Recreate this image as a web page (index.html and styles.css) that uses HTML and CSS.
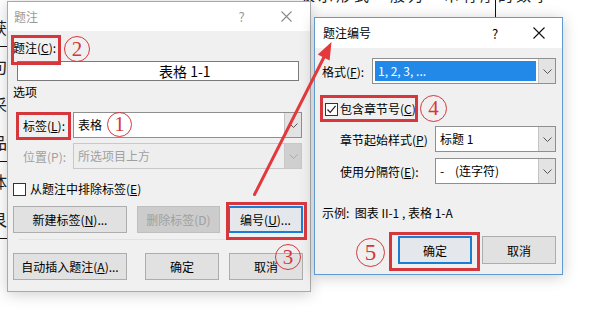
FILE: index.html
```html
<!DOCTYPE html>
<html lang="zh-CN">
<head>
<meta charset="utf-8">
<title>题注</title>
<link rel="stylesheet" href="styles.css">
</head>
<body>
<div class="desktop">
  <div class="doc">
    <div class="doc-top">表示形式一般为一串有序的数字</div>
    <div class="doc-rule"></div>
    <div class="doc-left">
      <div class="dl-row ruled">获</div>
      <div class="dl-row">句</div>
      <div class="dl-row">采</div>
      <div class="dl-row ruled">品</div>
      <div class="dl-row">体</div>
      <div class="dl-row ruled">艮</div>
    </div>
  </div>

  <section class="dlg dlg-caption">
    <header class="titlebar inactive">
      <span class="title">题注</span>
      <span class="tb-btn">?</span>
      <span class="tb-btn"><svg width="11" height="11" viewBox="0 0 11 11"><path d="M0.5 0.5L10.5 10.5M10.5 0.5L0.5 10.5" stroke="#8a8a8a" stroke-width="1.1" fill="none"/></svg></span>
    </header>
    <div class="body body-caption">
      <div class="line lbl-caption">题注(<u>C</u>):</div>
      <div class="textbox caption-box">表格 1-1</div>
      <div class="line group-title">选项</div>
      <div class="field field-first">
        <span class="field-lbl">标签(<u>L</u>):</span>
        <div class="combo"><span class="combo-text">表格</span><span class="combo-btn"><svg width="9" height="5" viewBox="0 0 9 5"><path d="M0.5 0.5L4.5 4.5L8.5 0.5" stroke="#555" fill="none"/></svg></span></div>
      </div>
      <div class="field field-second">
        <span class="field-lbl disabled-text">位置(P):</span>
        <div class="combo combo-disabled"><span class="combo-text">所选项目上方</span><span class="combo-btn"><svg width="9" height="5" viewBox="0 0 9 5"><path d="M0.5 0.5L4.5 4.5L8.5 0.5" stroke="#aaa" fill="none"/></svg></span></div>
      </div>
      <label class="check-row exclude-row"><span class="cb"></span><span>从题注中排除标签(<u>E</u>)</span></label>
      <div class="btn-row row-label-btns">
        <span class="btn btn-wide">新建标签(<u>N</u>)...</span>
        <span class="btn btn-del disabled">删除标签(D)</span>
        <span class="btn btn-num default">编号(<u>U</u>)...</span>
      </div>
      <div class="sep"></div>
      <div class="btn-row row-bottom">
        <span class="btn btn-wide">自动插入题注(<u>A</u>)...</span>
        <span class="btn btn-std btn-ok">确定</span>
        <span class="btn btn-std">取消</span>
      </div>
    </div>
  </section>

  <section class="dlg dlg-number">
    <header class="titlebar active">
      <span class="title">题注编号</span>
      <span class="tb-btn">?</span>
      <span class="tb-btn"><svg width="12" height="12" viewBox="0 0 12 12"><path d="M0.5 0.5L11.5 11.5M11.5 0.5L0.5 11.5" stroke="#111" stroke-width="1.1" fill="none"/></svg></span>
    </header>
    <div class="body body-number">
      <div class="field field-format">
        <span class="field-lbl lbl-format">格式(<u>F</u>):</span>
        <div class="combo"><span class="combo-sel">1, 2, 3, ...</span><span class="combo-btn"><svg width="9" height="5" viewBox="0 0 9 5"><path d="M0.5 0.5L4.5 4.5L8.5 0.5" stroke="#555" fill="none"/></svg></span></div>
      </div>
      <label class="check-row chapter-row"><span class="cb checked"><svg width="11" height="11" viewBox="0 0 11 11"><path d="M1.5 5.5L4.2 8.4L9.6 1.8" stroke="#222" stroke-width="1.2" fill="none"/></svg></span><span>包含章节号(<u>C</u>)</span></label>
      <div class="field field-sub field-style">
        <span class="field-lbl lbl-sub">章节起始样式(<u>P</u>)</span>
        <div class="combo"><span class="combo-text">标题 1</span><span class="combo-btn"><svg width="9" height="5" viewBox="0 0 9 5"><path d="M0.5 0.5L4.5 4.5L8.5 0.5" stroke="#555" fill="none"/></svg></span></div>
      </div>
      <div class="field field-sub field-sep">
        <span class="field-lbl lbl-sub">使用分隔符(<u>E</u>):</span>
        <div class="combo"><span class="combo-text">-&nbsp;&nbsp;&nbsp;&nbsp;(连字符)</span><span class="combo-btn"><svg width="9" height="5" viewBox="0 0 9 5"><path d="M0.5 0.5L4.5 4.5L8.5 0.5" stroke="#555" fill="none"/></svg></span></div>
      </div>
      <div class="line example">示例:&nbsp;&nbsp;图表 II-1 , 表格 1-A</div>
      <div class="btn-row row-number-btns">
        <span class="btn btn-std default">确定</span>
        <span class="btn btn-std">取消</span>
      </div>
    </div>
  </section>

  <div class="mark mark-a"></div>
  <div class="mark mark-b"></div>
  <div class="mark mark-c"></div>
  <div class="mark mark-d"></div>
  <div class="mark mark-e"></div>

  <span class="num num-1">1</span>
  <span class="num num-2">2</span>
  <span class="num num-3">3</span>
  <span class="num num-4">4</span>
  <span class="num num-5">5</span>

  <svg class="arrow" width="599" height="310" viewBox="0 0 599 310">
    <path d="M254.5 194.5 L323.8 57.5" stroke="#e3383c" stroke-width="3" stroke-linecap="round" fill="none"/>
    <polygon points="331.5,42 329.6,60.5 317.8,54.6" fill="#e3383c"/>
  </svg>
</div>
</body>
</html>
```

FILE: styles.css
```css
* {
  box-sizing: border-box;
  margin: 0;
  padding: 0;
}

html, body {
  width: 599px;
  height: 310px;
  overflow: hidden;
  background: #fff;
}

body {
  font-family: "Noto Sans CJK SC", "Microsoft YaHei", sans-serif;
  font-size: 12px;
  color: #000;
}

u {
  text-decoration: underline;
  text-underline-offset: 1px;
}

.desktop {
  position: relative;
  width: 599px;
  height: 310px;
  overflow: hidden;
}

/* document behind the dialogs */
.doc {
  position: absolute;
  inset: 0;
}

.doc-top {
  position: absolute;
  left: 300px;
  top: -14px;
  font-size: 15px;
  line-height: 17px;
  letter-spacing: 3px;
  color: #222;
  white-space: nowrap;
}

.doc-rule {
  position: absolute;
  left: 495px;
  top: 0;
  width: 1px;
  height: 17px;
  background: #111;
}

.doc-left {
  position: absolute;
  left: -9px;
  top: 8px;
  width: 18px;
  font-size: 16px;
  line-height: 38px;
  color: #222;
}

.dl-row.ruled {
  border-bottom: 1px solid #111;
}

/* dialogs */
.dlg {
  position: absolute;
  display: flex;
  flex-direction: column;
  background: #f0f0f0;
  box-shadow: 0 2px 14px rgba(0, 0, 0, 0.2);
}

.dlg-caption {
  left: 7px;
  top: 1px;
  width: 304px;
  height: 291px;
  border: 1px solid #a9a9a9;
}

.dlg-number {
  left: 314px;
  top: 17px;
  width: 249px;
  height: 258px;
  border: 1px solid #5f9bd0;
}

.titlebar {
  display: flex;
  align-items: center;
  background: #fff;
  flex: none;
}

.titlebar.inactive {
  height: 29px;
  padding-left: 6px;
  padding-right: 1px;
  color: #999;
}

.titlebar.active {
  height: 30px;
  padding-left: 8px;
  padding-right: 1px;
  color: #000;
}

.titlebar .title {
  flex: 1;
  line-height: 16px;
}

.tb-btn {
  width: 45px;
  height: 100%;
  display: flex;
  align-items: center;
  justify-content: center;
  font-size: 13px;
}

.titlebar.active .tb-btn {
  width: 44px;
}

.body {
  flex: 1;
  display: flex;
  flex-direction: column;
}

.body-caption {
  padding: 0 7px 0 5px;
}

.body-number {
  padding: 0 6px 0 7px;
}

.line {
  line-height: 20px;
  height: 20px;
  white-space: nowrap;
}

.lbl-caption {
  margin-top: 7px;
}

.textbox {
  background: #fff;
  border: 1px solid #7a7a7a;
}

.caption-box {
  margin-top: 3px;
  margin-left: 4px;
  width: 282px;
  height: 20px;
  padding-left: 141px;
  font-size: 14px;
  line-height: 18px;
}

.group-title {
  margin-top: 1px;
}

.field {
  display: flex;
  align-items: center;
  height: 26px;
}

.field-first {
  margin-top: 10px;
  padding-left: 10px;
  padding-right: 1px;
}

.field-second {
  margin-top: 5px;
  padding-left: 10px;
  padding-right: 1px;
}

.field-lbl {
  width: 50px;
  flex: none;
  white-space: nowrap;
}

.disabled-text {
  color: #a0a0a0;
}

.combo {
  flex: 1;
  height: 26px;
  display: flex;
  background: #fff;
  border: 1px solid #8f8f8f;
}

.combo-text {
  flex: 1;
  padding-left: 4px;
  line-height: 24px;
  white-space: nowrap;
}

.combo-btn {
  width: 17px;
  flex: none;
  display: flex;
  align-items: center;
  justify-content: center;
  background: #e3e3e3;
  border-left: 1px solid #c4c4c4;
}

.combo-disabled {
  background: #eeeeee;
  border-color: #c8c8c8;
  color: #a0a0a0;
}

.combo-disabled .combo-btn {
  background: #cfcfcf;
  border-left-color: #c8c8c8;
}

.combo-sel {
  flex: 1;
  margin: 2px;
  padding-left: 3px;
  background: #2289e8;
  color: #fff;
  line-height: 20px;
  white-space: nowrap;
}

.check-row {
  display: flex;
  align-items: center;
  gap: 4px;
  height: 16px;
  line-height: 16px;
  white-space: nowrap;
}

.exclude-row {
  margin-top: 12px;
}

.cb {
  width: 13px;
  height: 13px;
  flex: none;
  display: flex;
  align-items: center;
  justify-content: center;
  background: #fff;
  border: 1px solid #333;
}

.btn-row {
  display: flex;
  height: 27px;
}

.row-label-btns {
  margin-top: 9px;
}

.sep {
  margin-top: 6px;
  height: 1px;
  background: #e2e2e2;
  margin-left: 6px;
  margin-right: 4px;
}

.row-bottom {
  margin-top: 13px;
}

.btn {
  height: 27px;
  display: flex;
  align-items: center;
  justify-content: center;
  background: #e1e1e1;
  border: 1px solid #adadad;
  white-space: nowrap;
}

.btn.default {
  border: 2px solid #1a7fd4;
  background: #e4e8ec;
}

.btn.disabled {
  background: #cccccc;
  border-color: #bfbfbf;
  color: #a0a0a0;
}

.btn-wide {
  width: 114px;
}

.btn-del {
  width: 83px;
  margin-left: 10px;
}

.btn-num {
  width: 75px;
  margin-left: 8px;
}

.btn-std {
  width: 74px;
}

.btn-ok {
  margin-left: 18px;
  margin-right: 10px;
}

/* right dialog rows */
.field-format {
  margin-top: 10px;
}

.chapter-row {
  margin-top: 17px;
  padding-left: 3px;
  gap: 2px;
}

.field-sub {
  padding-left: 18px;
}

.field-style {
  margin-top: 9px;
}

.field-sep {
  margin-top: 6px;
}

.lbl-sub {
  width: 95px;
}

.example {
  margin-top: 19px;
}

.row-number-btns {
  margin-top: 13px;
  height: 28px;
  justify-content: flex-end;
  gap: 10px;
}

.row-number-btns .btn {
  height: 28px;
}

/* annotation overlays */
.mark {
  position: absolute;
  border: 3px solid #d6373d;
}

.mark-a { left: 11px; top: 35px; width: 50px; height: 30px; }
.mark-b { left: 16px; top: 112px; width: 55px; height: 28px; }
.mark-c { left: 226px; top: 202px; width: 81px; height: 38px; }
.mark-d { left: 320px; top: 95px; width: 98px; height: 27px; }
.mark-e { left: 389px; top: 232px; width: 91px; height: 39px; }

.num {
  position: absolute;
  width: 26px;
  height: 26px;
  border: 1.2px solid #d6373d;
  border-radius: 50%;
  color: #d6373d;
  font-family: "Liberation Serif", "DejaVu Serif", serif;
  font-size: 21px;
  line-height: 24px;
  text-align: center;
}

.num-2 { left: 64px; top: 36px; }
.num-1 { left: 107px; top: 112px; width: 25px; height: 25px; line-height: 23px; }
.num-3 { left: 275px; top: 244px; }
.num-4 { left: 420px; top: 95px; width: 27px; height: 27px; line-height: 25px; }
.num-5 { left: 356px; top: 238px; width: 29px; height: 29px; line-height: 27px; font-size: 23px; }

.arrow {
  position: absolute;
  left: 0;
  top: 0;
  pointer-events: none;
}
```
